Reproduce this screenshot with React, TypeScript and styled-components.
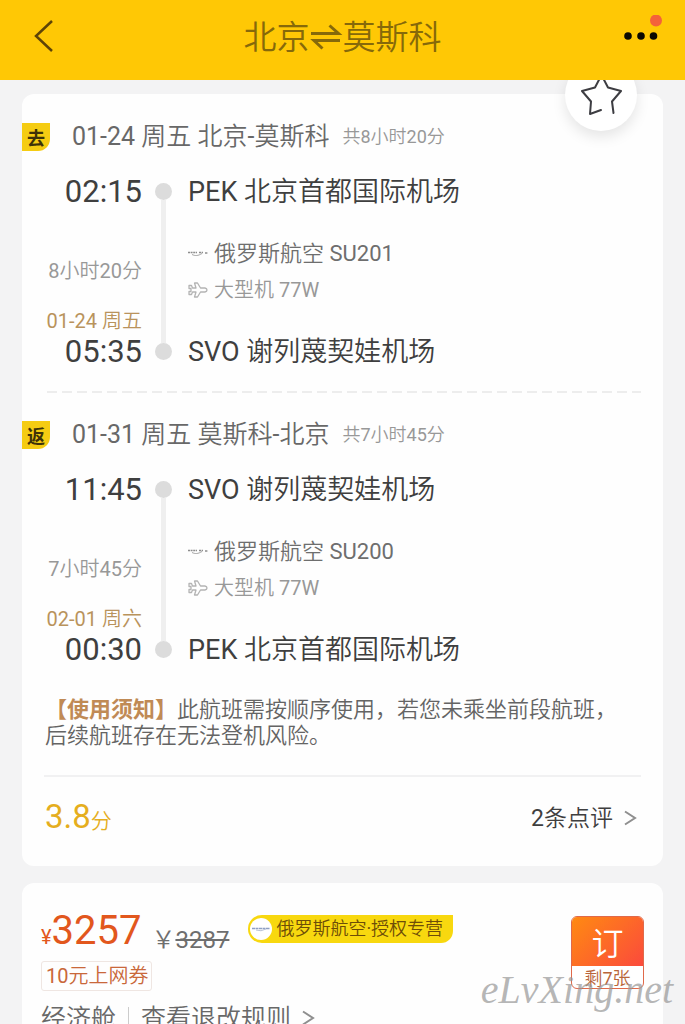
import React from 'react';
import styled, { createGlobalStyle } from 'styled-components';

const GlobalStyle = createGlobalStyle`
  *, *::before, *::after { box-sizing: border-box; }
  body {
    margin: 0;
    background: #f3f3f4;
    color: #3f3f3f;
    font-family: Roboto, "Noto Sans CJK SC DemiLight", "Noto Sans CJK SC", sans-serif;
    font-weight: 400;
  }
  button { font: inherit; color: inherit; border: 0; padding: 0; background: none; cursor: pointer; }
  a { color: inherit; text-decoration: none; }
  h1, h2, p { margin: 0; font-weight: inherit; }
  svg { display: block; flex: none; }
`;

const Screen = styled.div`
  position: relative;
  display: flex;
  flex-direction: column;
  height: 100vh;
  overflow: hidden;
`;

const Header = styled.header`
  flex: none;
  display: grid;
  grid-template-columns: 1fr auto 1fr;
  align-items: center;
  height: 80px;
  padding: 0 22px 6px;
  background: #ffc805;
`;

const Title = styled.h1`
  display: flex;
  align-items: center;
  padding-top: 2px;
  color: #86690a;
  font-size: 33px;
  line-height: 44px;
`;

const IconButton = styled.button<{ $end?: boolean }>`
  justify-self: ${(p) => (p.$end ? 'end' : 'start')};
  width: 44px;
  height: 44px;
`;

const Main = styled.main`
  position: relative;
  flex: 1;
  min-height: 0;
  display: flex;
  flex-direction: column;
  gap: 17px;
  padding: 14px 22px;
  overflow: hidden auto;
  scrollbar-width: none;
`;

const Card = styled.section`
  flex: none;
  padding-top: 1px;
  border-radius: 12px;
  background: #fefefe;
`;

const FavoriteButton = styled.button`
  position: absolute;
  top: -21px;
  right: 48px;
  width: 72px;
  height: 72px;
  border-radius: 50%;
  background: #fff;
  box-shadow: 0 6px 14px rgba(0, 0, 0, 0.1);
`;

const Trip = styled.article`
  padding-top: 24px;
`;

const TripHead = styled.div`
  display: flex;
  align-items: center;
  height: 36px;
`;

const Badge = styled.span`
  width: 28px;
  height: 28px;
  margin-right: 22px;
  border-radius: 0 0 12px 0;
  background: #f5cc12;
  color: #3d3208;
  font-family: "Noto Sans CJK SC", sans-serif;
  font-size: 18px;
  font-weight: 700;
  line-height: 28px;
  text-align: center;
`;

const TripTitle = styled.h2`
  margin-right: 13px;
  color: #686868;
  font-size: 25px;
  line-height: 38px;
`;

const Total = styled.span`
  color: #989898;
  font-size: 18px;
  line-height: 38px;
`;

const TripBody = styled.div`
  display: grid;
  grid-template-columns: 120px 17px 1fr;
  column-gap: 13px;
  height: 196px;
  margin-top: 18px;
`;

const Times = styled.div`
  display: flex;
  flex-direction: column;
  text-align: right;
`;

const Time = styled.time`
  font-size: 31px;
  line-height: 38px;
`;

const SmallLine = styled.span<{ $accent?: boolean }>`
  margin-top: ${(p) => (p.$accent ? 26 : 48)}px;
  color: ${(p) => (p.$accent ? '#b9935c' : '#989898')};
  font-size: 20px;
  line-height: 24px;
`;

const Rail = styled.div`
  display: flex;
  flex-direction: column;
  align-items: center;
  padding: 10px 0 11px;
`;

const Dot = styled.i`
  width: 17px;
  height: 17px;
  border-radius: 50%;
  background: #dcdcdc;
`;

const Line = styled.i`
  flex: 1;
  width: 5px;
  background: #efefef;
`;

const Stops = styled.div`
  display: flex;
  flex-direction: column;
  justify-content: space-between;
  padding-left: 3px;
`;

const Airport = styled.p`
  font-size: 27px;
  line-height: 38px;
`;

const Detail = styled.p<{ $minor?: boolean }>`
  display: flex;
  align-items: center;
  gap: 6px;
  color: ${(p) => (p.$minor ? '#989898' : '#6e6e6e')};
  font-size: ${(p) => (p.$minor ? 20 : 22)}px;
  line-height: 36px;
`;

const DashedRule = styled.svg`
  width: calc(100% - 44px);
  height: 2px;
  margin: 22px 22px 0;
`;

const Notice = styled.p`
  margin: 15px 22px 0;
  padding: 14px 22px 26px 1px;
  border-bottom: 2px solid #f1f1f2;
  color: #646464;
  font-size: 22px;
  line-height: 26px;
`;

const NoticeTag = styled.strong`
  color: #c08a55;
  font-family: "Noto Sans CJK SC", sans-serif;
  font-weight: 700;
  line-height: 1;
`;

const ScoreRow = styled.div`
  display: flex;
  align-items: center;
  justify-content: space-between;
  height: 89px;
  padding: 0 26px 5px 23px;
`;

const Score = styled.p`
  color: #e5ae1e;
  font-size: 33px;
  line-height: 40px;
`;

const ScoreUnit = styled.span`
  font-size: 21px;
`;

const ArrowLink = styled.a<{ $size: number }>`
  display: flex;
  align-items: center;
  gap: 10px;
  font-size: ${(p) => p.$size}px;
  line-height: 36px;
`;

const Offer = styled.div`
  display: flex;
  justify-content: space-between;
  padding: 23px 19px 30px;
`;

const OfferInfo = styled.div`
  display: flex;
  flex-direction: column;
  align-items: flex-start;
`;

const PriceRow = styled.div`
  display: flex;
  align-items: baseline;
  height: 54px;
  color: #e2571d;
  line-height: 48px;
`;

const Currency = styled.span`
  font-size: 20px;
`;

const Price = styled.strong`
  font-size: 40px;
  font-weight: 400;
`;

const OldPrice = styled.span`
  align-self: flex-start;
  margin: 17px 0 0 10px;
  color: #6e6e6e;
  font-size: 24px;
  line-height: 32px;
`;

const AirlineBadge = styled.span`
  align-self: flex-start;
  display: flex;
  align-items: center;
  gap: 3px;
  height: 28px;
  margin: 8px 0 0 19px;
  padding: 0 10px 0 1px;
  border-radius: 14px 0 12px 14px;
  background: #f8d80f;
  color: #6d4d08;
  font-size: 18px;
  line-height: 28px;
`;

const Coupon = styled.span`
  padding: 0 3px 0 4px;
  border: 1px solid #efe6e2;
  border-radius: 3px;
  color: #c9683a;
  font-size: 20px;
  line-height: 28px;
`;

const ClassRow = styled.div`
  display: flex;
  align-items: center;
  margin-top: 10px;
  color: #686868;
  font-size: 25px;
  line-height: 36px;
`;

const Separator = styled.i`
  width: 1px;
  height: 24px;
  margin: 0 12px;
  background: #ccc;
`;

const BookButton = styled.button`
  display: flex;
  flex-direction: column;
  width: 73px;
  height: 73px;
  margin-top: 9px;
  border: 1px solid #e0694a;
  border-radius: 6px;
  overflow: hidden;
  background: #fff;
  color: #b9653a;
  font-size: 18px;
  line-height: 26px;
`;

const BookLabel = styled.span`
  align-self: stretch;
  height: 49px;
  background: linear-gradient(135deg, #ff8a12, #fb4a3c);
  color: #fff;
  font-size: 32px;
  line-height: 54px;
`;

const SeatsLeft = styled.span`
  align-self: center;
`;

const Watermark = styled.span`
  position: absolute;
  right: 12px;
  bottom: 12px;
  color: rgba(150, 150, 150, 0.7);
  font-family: "Liberation Serif", serif;
  font-size: 40px;
  font-style: italic;
  font-weight: 400;
  line-height: 44px;
  pointer-events: none;
`;

const Swap = () => (
  <svg width="33" height="33" viewBox="0 0 33 33" fill="none" stroke="currentColor" strokeWidth="3" role="img" aria-label="往返">
    <path d="M1 11.500H28.500L19.500 3.500M30 18.500H4L12.500 26.500" />
  </svg>
);

const Chevron = ({ color = '#8f8f8f' }: { color?: string }) => (
  <svg width="14" height="18" viewBox="0 0 14 18" fill="none" stroke={color} strokeWidth="2" aria-hidden="true">
    <path d="M2 1.500L12 8L2 14.500" />
  </svg>
);

const AirlineMark = ({ color = '#8d8d8d' }: { color?: string }) => (
  <svg width="20" height="10" viewBox="0 0 20 10" fill="none" stroke={color} aria-hidden="true">
    <path d="M0 3.500H9M11 3.500H15M17 4H20" strokeWidth="1.500" strokeDasharray="2 .6" />
    <path d="M4 5.500C7 7 10 7 14 4.500" strokeWidth=".8" />
  </svg>
);

const PlaneIcon = () => (
  <svg width="20" height="18" viewBox="0 0 20 18" fill="none" stroke="#b4b4b4" strokeWidth="1.300" strokeLinejoin="round" aria-hidden="true">
    <path d="M1 4.500H3.500L4.500 7H8L6.500 2H9.500L12.500 7H17Q19 7.500 19 9T17 11H12.500L9.500 16H6.500L8 11H4.500L3.500 13.500H1V10.500H3V7.500H1Z" />
  </svg>
);

interface TripData {
  badge: string;
  title: string;
  total: string;
  depart: string;
  arrive: string;
  duration: string;
  arriveDate: string;
  from: string;
  to: string;
  flight: string;
}

const trips: TripData[] = [
  {
    badge: '去', title: '01-24 周五 北京-莫斯科', total: '共8小时20分',
    depart: '02:15', arrive: '05:35', duration: '8小时20分', arriveDate: '01-24 周五',
    from: 'PEK 北京首都国际机场', to: 'SVO 谢列蔑契娃机场', flight: '俄罗斯航空 SU201',
  },
  {
    badge: '返', title: '01-31 周五 莫斯科-北京', total: '共7小时45分',
    depart: '11:45', arrive: '00:30', duration: '7小时45分', arriveDate: '02-01 周六',
    from: 'SVO 谢列蔑契娃机场', to: 'PEK 北京首都国际机场', flight: '俄罗斯航空 SU200',
  },
];

const TripView = ({ trip }: { trip: TripData }) => (
  <Trip>
    <TripHead>
      <Badge>{trip.badge}</Badge>
      <TripTitle>{trip.title}</TripTitle>
      <Total>{trip.total}</Total>
    </TripHead>
    <TripBody>
      <Times>
        <Time>{trip.depart}</Time>
        <SmallLine>{trip.duration}</SmallLine>
        <SmallLine $accent>{trip.arriveDate}</SmallLine>
        <Time>{trip.arrive}</Time>
      </Times>
      <Rail><Dot /><Line /><Dot /></Rail>
      <Stops>
        <Airport>{trip.from}</Airport>
        <div>
          <Detail><AirlineMark />{trip.flight}</Detail>
          <Detail $minor><PlaneIcon />大型机 77W</Detail>
        </div>
        <Airport>{trip.to}</Airport>
      </Stops>
    </TripBody>
  </Trip>
);

export default function App() {
  return (
    <Screen>
      <GlobalStyle />
      <Header>
        <IconButton aria-label="返回">
          <svg width="44" height="44" viewBox="0 0 44 44" fill="none" stroke="#5e4407" strokeWidth="2.500">
            <path d="M30 6L14 21L30 36" />
          </svg>
        </IconButton>
        <Title>北京<Swap />莫斯科</Title>
        <IconButton $end aria-label="更多">
          <svg width="44" height="44" viewBox="0 0 44 44">
            <g fill="#0c0a02">
              <circle cx="9" cy="21" r="3.800" />
              <circle cx="22" cy="21" r="3.800" />
              <circle cx="34.500" cy="21" r="3.800" />
            </g>
            <circle cx="37" cy="5.500" r="6" fill="#f4623a" />
          </svg>
        </IconButton>
      </Header>

      <Main>
        <Card>
          <TripView trip={trips[0]} />
          <DashedRule aria-hidden="true">
            <line x1="3" y1="1" x2="100%" y2="1" stroke="#ededed" strokeWidth="2" strokeDasharray="10 5" />
          </DashedRule>
          <TripView trip={trips[1]} />
          <Notice>
            <NoticeTag>【使用须知】</NoticeTag>此航班需按顺序使用，若您未乘坐前段航班，后续航班存在无法登机风险。
          </Notice>
          <ScoreRow>
            <Score>3.8<ScoreUnit>分</ScoreUnit></Score>
            <ArrowLink $size={23} href="#reviews">2条点评<Chevron /></ArrowLink>
          </ScoreRow>
        </Card>

        <Card>
          <Offer>
            <OfferInfo>
              <PriceRow>
                <Currency>¥</Currency>
                <Price>3257</Price>
                <OldPrice>￥<s>3287</s></OldPrice>
                <AirlineBadge>
                  <svg width="24" height="24" viewBox="0 0 24 24" aria-hidden="true">
                    <circle cx="12" cy="12" r="11" fill="#fff" />
                    <path d="M3 11.500H21" stroke="#8fa0c4" strokeWidth="1.500" strokeDasharray="3 .5" />
                    <path d="M7 13Q12 15 17 12" stroke="#b9c3d8" fill="none" />
                  </svg>
                  俄罗斯航空·授权专营
                </AirlineBadge>
              </PriceRow>
              <Coupon>10元上网券</Coupon>
              <ClassRow>
                经济舱
                <Separator />
                <ArrowLink $size={25} href="#rules">查看退改规则<Chevron /></ArrowLink>
              </ClassRow>
            </OfferInfo>
            <BookButton>
              <BookLabel>订</BookLabel>
              <SeatsLeft>剩7张</SeatsLeft>
            </BookButton>
          </Offer>
        </Card>

        <FavoriteButton aria-label="收藏">
          <svg width="72" height="72" viewBox="0 0 72 72" fill="none" stroke="#3d3d42" strokeWidth="2" strokeLinecap="round" strokeLinejoin="round">
            <path d="M36 51L25 55L26 42.500L17 32L30 28.500L36.500 16L43 28.500L56 32L47 42.500L48.500 54" />
          </svg>
        </FavoriteButton>
      </Main>
      <Watermark>eLvXing.net</Watermark>
    </Screen>
  );
}
